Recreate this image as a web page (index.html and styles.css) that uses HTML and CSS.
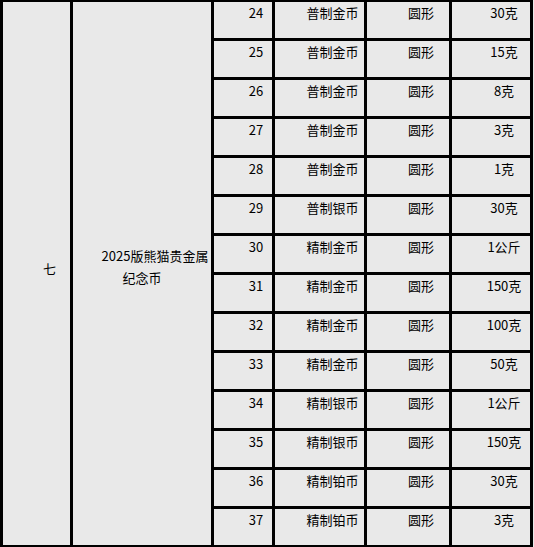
FILE: index.html
```html
<!DOCTYPE html>
<html lang="zh-CN">
<head>
<meta charset="utf-8">
<title>2025版熊猫贵金属纪念币</title>
<link rel="stylesheet" href="styles.css">
</head>
<body>
<div class="sheet">
  <div class="cell group"><p class="t">七</p></div>
  <div class="cell name"><p class="t">2025版熊猫贵金属纪念币</p></div>

  <div class="cell"><p class="t">24</p></div><div class="cell"><p class="t">普制金币</p></div><div class="cell"><p class="t">圆形</p></div><div class="cell"><p class="t">30克</p></div>
  <div class="cell"><p class="t">25</p></div><div class="cell"><p class="t">普制金币</p></div><div class="cell"><p class="t">圆形</p></div><div class="cell"><p class="t">15克</p></div>
  <div class="cell"><p class="t">26</p></div><div class="cell"><p class="t">普制金币</p></div><div class="cell"><p class="t">圆形</p></div><div class="cell"><p class="t">8克</p></div>
  <div class="cell"><p class="t">27</p></div><div class="cell"><p class="t">普制金币</p></div><div class="cell"><p class="t">圆形</p></div><div class="cell"><p class="t">3克</p></div>
  <div class="cell"><p class="t">28</p></div><div class="cell"><p class="t">普制金币</p></div><div class="cell"><p class="t">圆形</p></div><div class="cell"><p class="t">1克</p></div>
  <div class="cell"><p class="t">29</p></div><div class="cell"><p class="t">普制银币</p></div><div class="cell"><p class="t">圆形</p></div><div class="cell"><p class="t">30克</p></div>
  <div class="cell"><p class="t">30</p></div><div class="cell"><p class="t">精制金币</p></div><div class="cell"><p class="t">圆形</p></div><div class="cell"><p class="t">1公斤</p></div>
  <div class="cell"><p class="t">31</p></div><div class="cell"><p class="t">精制金币</p></div><div class="cell"><p class="t">圆形</p></div><div class="cell"><p class="t">150克</p></div>
  <div class="cell"><p class="t">32</p></div><div class="cell"><p class="t">精制金币</p></div><div class="cell"><p class="t">圆形</p></div><div class="cell"><p class="t">100克</p></div>
  <div class="cell"><p class="t">33</p></div><div class="cell"><p class="t">精制金币</p></div><div class="cell"><p class="t">圆形</p></div><div class="cell"><p class="t">50克</p></div>
  <div class="cell"><p class="t">34</p></div><div class="cell"><p class="t">精制银币</p></div><div class="cell"><p class="t">圆形</p></div><div class="cell"><p class="t">1公斤</p></div>
  <div class="cell"><p class="t">35</p></div><div class="cell"><p class="t">精制银币</p></div><div class="cell"><p class="t">圆形</p></div><div class="cell"><p class="t">150克</p></div>
  <div class="cell"><p class="t">36</p></div><div class="cell"><p class="t">精制铂币</p></div><div class="cell"><p class="t">圆形</p></div><div class="cell"><p class="t">30克</p></div>
  <div class="cell"><p class="t">37</p></div><div class="cell"><p class="t">精制铂币</p></div><div class="cell"><p class="t">圆形</p></div><div class="cell"><p class="t">3克</p></div>
</div>
</body>
</html>
```

FILE: styles.css
```css
html, body {
  margin: 0;
  padding: 0;
  background: #e9e9e9;
}

body {
  font-family: "Noto Sans CJK SC", "Liberation Sans", sans-serif;
  font-size: 13px;
  color: #000;
}

.sheet {
  display: grid;
  width: max-content;
  grid-template-columns: 67px 138px 58px 89px 82px 78px;
  grid-template-rows: repeat(14, 36px);
  gap: 3px;
  padding: 2px 3px 3px 3px;
  background: #000;
}

.cell {
  background: #e9e9e9;
  overflow: hidden;
}

.t {
  margin: 0;
  line-height: 22px;
  text-align: center;
  text-indent: 2em;
}

.group,
.name {
  grid-row: 1 / span 14;
  display: flex;
  flex-direction: column;
  justify-content: center;
}

.group {
  grid-column: 1;
  padding-bottom: 10px;
}

.name {
  grid-column: 2;
  padding-bottom: 14px;
}

.name .t {
  padding: 0 2px;
}
```
